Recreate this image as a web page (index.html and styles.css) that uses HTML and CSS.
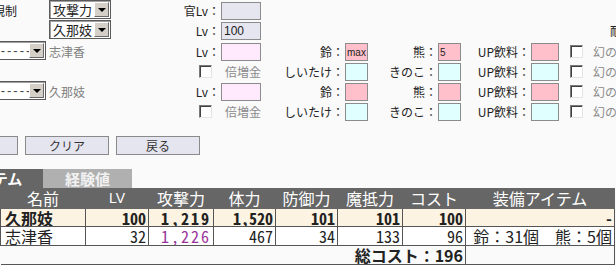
FILE: index.html
```html
<!DOCTYPE html>
<html lang="ja">
<head>
  <meta charset="UTF-8">
  <title>編成</title>
  <link rel="stylesheet" href="styles.css">
</head>
<body>

  <div class="form">
    <div class="lead">規制</div>
    <div class="select"><span class="select-value">攻撃力</span><span class="select-arrow"></span></div>
    <div class="label">官Lv：</div>
    <input class="box lv-box lavender" type="text" readonly>

    <div class="select c2"><span class="select-value">久那妓</span><span class="select-arrow"></span></div>
    <div class="label">Lv：</div>
    <input class="box lv-box lavender" type="text" value="100" readonly>
    <div class="note c12">耐</div>

    <div class="select c1 shifted"><span class="select-value dashes">-------</span><span class="select-arrow"></span></div>
    <div class="name">志津香</div>
    <div class="label">Lv：</div>
    <input class="box lv-box blush" type="text" readonly>
    <div class="label">鈴：</div>
    <input class="box item-box pink" type="text" value="max" readonly>
    <div class="label">熊：</div>
    <input class="box item-box pink" type="text" value="5" readonly>
    <div class="label">UP飲料：</div>
    <input class="box drink-box pink" type="text" readonly>
    <span class="check"></span>
    <div class="faded">幻の</div>

    <span class="check c3 right"></span>
    <div class="faded bonus">倍増金</div>
    <div class="label">しいたけ：</div>
    <input class="box item-box cyan" type="text" readonly>
    <div class="label">きのこ：</div>
    <input class="box item-box cyan" type="text" readonly>
    <div class="label">UP飲料：</div>
    <input class="box drink-box cyan" type="text" readonly>
    <span class="check"></span>
    <div class="faded">幻の</div>

    <div class="select c1 shifted"><span class="select-value dashes">-------</span><span class="select-arrow"></span></div>
    <div class="name">久那妓</div>
    <div class="label">Lv：</div>
    <input class="box lv-box blush" type="text" readonly>
    <div class="label">鈴：</div>
    <input class="box item-box pink" type="text" readonly>
    <div class="label">熊：</div>
    <input class="box item-box pink" type="text" readonly>
    <div class="label">UP飲料：</div>
    <input class="box drink-box pink" type="text" readonly>
    <span class="check"></span>
    <div class="faded">幻の</div>

    <span class="check c3 right"></span>
    <div class="faded bonus">倍増金</div>
    <div class="label">しいたけ：</div>
    <input class="box item-box cyan" type="text" readonly>
    <div class="label">きのこ：</div>
    <input class="box item-box cyan" type="text" readonly>
    <div class="label">UP飲料：</div>
    <input class="box drink-box cyan" type="text" readonly>
    <span class="check"></span>
    <div class="faded">幻の</div>
  </div>

  <div class="actions">
    <button>計算</button>
    <button>クリア</button>
    <button>戻る</button>
  </div>

  <div class="tabs">
    <div class="tab active">アイテム</div>
    <div class="tab">経験値</div>
  </div>

  <table class="party">
    <colgroup>
      <col class="w-name">
      <col class="w-lv">
      <col class="w-atk">
      <col class="w-hp">
      <col class="w-def">
      <col class="w-mdef">
      <col class="w-cost">
      <col class="w-equip">
    </colgroup>
    <tr>
      <th>名前</th>
      <th class="narrow">LV</th>
      <th>攻撃力</th>
      <th>体力</th>
      <th>防御力</th>
      <th>魔抵力</th>
      <th>コスト</th>
      <th>装備アイテム</th>
    </tr>
    <tr class="leader">
      <td class="who">久那妓</td>
      <td class="num">100</td>
      <td class="num atk">1,219</td>
      <td class="num">1,520</td>
      <td class="num">101</td>
      <td class="num">101</td>
      <td class="num">100</td>
      <td class="equip">-</td>
    </tr>
    <tr class="member">
      <td class="who">志津香</td>
      <td class="num">32</td>
      <td class="num atk boosted">1,226</td>
      <td class="num">467</td>
      <td class="num">34</td>
      <td class="num">133</td>
      <td class="num">96</td>
      <td class="equip">鈴：31個　熊：5個</td>
    </tr>
    <tr class="total">
      <td colspan="7">総コスト：196</td>
      <td></td>
    </tr>
  </table>

</body>
</html>
```

FILE: styles.css
```css
* {
  box-sizing: border-box;
  margin: 0;
  padding: 0;
}

body {
  font-family: "Noto Sans CJK JP", sans-serif;
  font-size: 12px;
  color: #222;
  background-color: #fafafa;
  width: 616px;
  height: 265px;
  overflow: hidden;
}

/* form grid */
.form {
  display: grid;
  grid-template-columns: 48px 64px 109px 42px 82px 24px 69px 24px 69px 29px 30px 1fr;
  grid-template-rows: 20px 21px 20px 20px 20px 20px;
  padding-top: 2px;
  align-items: start;
  white-space: nowrap;
}

.c1 { grid-column-start: 1; }
.c2 { grid-column-start: 2; }
.c3 { grid-column-start: 3; }
.c12 { grid-column-start: 12; }

.lead {
  line-height: 18px;
  margin-left: -7px;
}

.label {
  line-height: 18px;
  text-align: right;
  padding-right: 1px;
}

.name {
  line-height: 18px;
  padding-left: 1px;
  color: #808080;
}

.faded {
  line-height: 18px;
  padding-left: 3px;
  color: #8a8a8a;
}

.faded.bonus {
  padding-left: 4px;
}

.note {
  line-height: 18px;
  padding-left: 20px;
}

/* fake select */
.select {
  display: flex;
  width: 62px;
  height: 19px;
  margin: -2px 0 0 1px;
  border: 1px solid #5a5a5a;
  box-shadow: inset 1px 1px 0 #a0a0a0;
  background-color: #fff;
  font-size: 13px;
  line-height: 17px;
}

.select.shifted {
  margin-left: -16px;
}

.select-value {
  flex: 1;
  padding-left: 3px;
  overflow: hidden;
}

.select-value.dashes {
  letter-spacing: 2px;
  font-family: "Liberation Sans", sans-serif;
  color: #444;
}

.select-arrow {
  display: flex;
  align-items: center;
  justify-content: center;
  width: 15px;
  margin: 1px 1px 1px 0;
  background-color: #d4d0c8;
  border: 1px solid;
  border-color: #fff #6a6a6a #6a6a6a #fff;
}

.select-arrow::after {
  content: "";
  border-left: 4px solid transparent;
  border-right: 4px solid transparent;
  border-top: 4px solid #000;
  margin-top: 1px;
}

/* text boxes */
.box {
  display: block;
  height: 18px;
  border: 1px solid #8c8c8c;
  padding-left: 2px;
  font-family: "Liberation Sans", sans-serif;
  font-size: 12px;
  color: #222;
  outline: none;
}

.lv-box { width: 40px; }
.item-box { width: 23px; padding-left: 1px; font-size: 10px; }
.drink-box { width: 28px; }

.lavender { background-color: #e6e6f1; }
.blush { background-color: #ffeafd; }
.pink { background-color: #ffc0cb; }
.cyan { background-color: #e0ffff; }

.check {
  display: block;
  width: 13px;
  height: 13px;
  margin: 2px 0 0 10px;
  background-color: #fff;
  border: 1px solid;
  border-color: #7a7a7a #e4e4e4 #e4e4e4 #7a7a7a;
  box-shadow: inset 1px 1px 0 #404040;
}

.check.right {
  margin: 2px 9px 0 auto;
}

/* buttons */
.actions {
  display: flex;
  gap: 7px;
  margin: 13px 0 0 -66px;
}

.actions button {
  width: 84px;
  height: 19px;
  background-color: #e5e5ef;
  border: 1px solid #8a8a8a;
  font-family: "Noto Sans CJK JP", sans-serif;
  font-size: 12px;
  line-height: 15px;
  color: #333;
}

/* tabs */
.tabs {
  display: flex;
  margin: 14px 0 0 -57px;
}

.tab {
  width: 89px;
  height: 19px;
  line-height: 19px;
  text-align: center;
  font-size: 15px;
  font-weight: bold;
  color: #f2f2f2;
  background-color: #b0b0b0;
}

.tab.active {
  width: 100px;
  color: #fff;
  background-color: #666;
}

/* result table */
.party {
  border-collapse: collapse;
  table-layout: fixed;
  width: 614px;
  font-size: 16px;
}

.w-name { width: 85px; }
.w-lv { width: 63px; }
.w-atk { width: 65px; }
.w-hp { width: 62px; }
.w-def { width: 62px; }
.w-mdef { width: 65px; }
.w-cost { width: 63px; }
.w-equip { width: 149px; }

.party th {
  height: 20px;
  line-height: 17px;
  padding: 0;
  font-weight: normal;
  color: #fff;
  background-color: #666;
  border: 1px solid #666;
}

.party th.narrow {
  font-family: "Liberation Sans Narrow", "Liberation Sans", sans-serif;
  font-size: 14px;
}

.party td {
  height: 19px;
  line-height: 16px;
  padding: 0 2px;
  border: 1px solid #555;
  white-space: nowrap;
  overflow: hidden;
}

.party .leader td {
  height: 18px;
}

.party td.who {
  padding-left: 4px;
}

.party td.num {
  text-align: right;
  font-family: "Noto Sans Mono CJK JP", "Liberation Mono", monospace;
}

.party td.atk {
  letter-spacing: 2px;
}

.party td.equip {
  text-align: right;
}

.leader td {
  font-weight: bold;
  background-color: #fdf3e2;
}

.member td {
  background-color: #fff;
}

.boosted {
  color: #993399;
}

.total td {
  text-align: right;
  font-weight: bold;
  border-left: none;
  border-right: 1px solid #555;
}
```
